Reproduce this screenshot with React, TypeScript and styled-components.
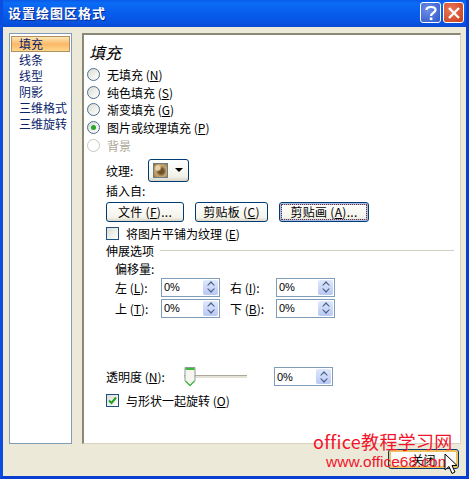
import React from "react";
import styled, { createGlobalStyle } from "styled-components";

const GlobalStyle = createGlobalStyle`
  html, body {
    margin: 0;
    padding: 0;
    background: #ffffff;
  }
  * {
    box-sizing: border-box;
  }
`;

const menuItems = ["填充", "线条", "线型", "阴影", "三维格式", "三维旋转"];

const fillOptions = [
  { label: "无填充", key: "N" },
  { label: "纯色填充", key: "S" },
  { label: "渐变填充", key: "G" },
  { label: "图片或纹理填充", key: "P", checked: true },
  { label: "背景", disabled: true },
];

function Spinner({ value }: { value: string }) {
  return (
    <SpinBox>
      <SpinValue>{value}</SpinValue>
      <SpinButtons>
        <svg width="14" height="16" viewBox="0 0 14 16">
          <path d="M7 2 L11 6.5 H9.6 L7 4 L4.4 6.5 H3 Z" fill="#4d6185" />
          <path d="M7 14 L11 9.5 H9.6 L7 12 L4.4 9.5 H3 Z" fill="#4d6185" />
        </svg>
      </SpinButtons>
    </SpinBox>
  );
}

function Radio({ checked, disabled }: { checked?: boolean; disabled?: boolean }) {
  return (
    <RadioCircle $disabled={disabled}>{checked && <RadioDot />}</RadioCircle>
  );
}

export default function App() {
  return (
    <>
      <GlobalStyle />
      <Window>
        <TitleBar>
          <TitleText>设置绘图区格式</TitleText>
          <TitleButtons>
            <HelpButton>
              <svg width="14" height="16" viewBox="0 0 14 16">
                <path
                  d="M2.5 5 C2.5 1 11.5 1 11.5 5 C11.5 8 7 7.5 7 11"
                  fill="none"
                  stroke="#fff"
                  strokeWidth="2.2"
                />
                <rect x="5.8" y="12.5" width="2.6" height="2.6" fill="#fff" />
              </svg>
            </HelpButton>
            <CloseButton>
              <svg width="14" height="14" viewBox="0 0 14 14">
                <path d="M2 2 L12 12 M12 2 L2 12" stroke="#fff" strokeWidth="2.4" />
              </svg>
            </CloseButton>
          </TitleButtons>
        </TitleBar>
        <Body>
          <Panels>
            <Sidebar>
              {menuItems.map((item, i) => (
                <MenuItem key={item} $active={i === 0}>
                  {item}
                </MenuItem>
              ))}
            </Sidebar>
            <Content>
              <Heading>填充</Heading>
              <RadioList>
                {fillOptions.map((opt) => (
                  <RadioRow key={opt.label} $disabled={opt.disabled}>
                    <Radio checked={opt.checked} disabled={opt.disabled} />
                    <span>
                      {opt.label}
                      {opt.key && (
                        <>
                          {" ("}
                          <Key>{opt.key}</Key>
                          {")"}
                        </>
                      )}
                    </span>
                  </RadioRow>
                ))}
              </RadioList>
              <Section>
                <TextureRow>
                  <span>纹理:</span>
                  <TextureButton>
                    <TextureSwatch />
                    <ArrowDown />
                  </TextureButton>
                </TextureRow>
                <Label>插入自:</Label>
                <ButtonRow>
                  <Button $w={78}>
                    文件 (<Key>F</Key>)...
                  </Button>
                  <Button $w={73}>
                    剪贴板 (<Key>C</Key>)
                  </Button>
                  <Button $w={90} $focused>
                    剪贴画 (<Key>A</Key>)...
                  </Button>
                </ButtonRow>
                <CheckRow $top={4}>
                  <CheckBox />
                  <span>
                    将图片平铺为纹理 (<Key>E</Key>)
                  </span>
                </CheckRow>
                <GroupHeading>
                  <span>伸展选项</span>
                  <GroupLine />
                </GroupHeading>
                <OffsetBlock>
                  <Label>偏移量:</Label>
                  <OffsetGrid>
                    <span>
                      左 (<Key>L</Key>):
                    </span>
                    <Spinner value="0%" />
                    <span>
                      右 (<Key>I</Key>):
                    </span>
                    <Spinner value="0%" />
                    <span>
                      上 (<Key>T</Key>):
                    </span>
                    <Spinner value="0%" />
                    <span>
                      下 (<Key>B</Key>):
                    </span>
                    <Spinner value="0%" />
                  </OffsetGrid>
                </OffsetBlock>
                <SliderRow>
                  <SliderLabel>
                    透明度 (<Key>N</Key>):
                  </SliderLabel>
                  <SliderTrack>
                    <SliderThumb viewBox="0 0 12 21" width="12" height="21">
                      <path d="M1 1.5 H11 V15 L6 20 L1 15 Z" fill="#f6f5ee" stroke="#8a9aa0" />
                      <path d="M1.5 2 H10.5 V4 H1.5 Z" fill="#3fb83f" />
                      <path d="M1.5 15 L6 19.5 L10.5 15" fill="none" stroke="#4cb84c" strokeWidth="1.4" />
                    </SliderThumb>
                  </SliderTrack>
                  <Spinner value="0%" />
                </SliderRow>
                <CheckRow $top={6}>
                  <CheckBox $checked>
                    <svg width="9" height="9" viewBox="0 0 9 9">
                      <path d="M1 4.5 L3.5 7 L8 1.5" fill="none" stroke="#21a121" strokeWidth="2" />
                    </svg>
                  </CheckBox>
                  <span>
                    与形状一起旋转 (<Key>O</Key>)
                  </span>
                </CheckRow>
              </Section>
            </Content>
          </Panels>
          <Footer>
            <FooterButton>关闭</FooterButton>
          </Footer>
        </Body>
        <WatermarkTitle>office教程学习网</WatermarkTitle>
        <WatermarkUrl>www.office68.com</WatermarkUrl>
        <Cursor viewBox="0 0 14 22" width="14" height="22">
          <path d="M1 1 V17 L5 13.5 L8 20.5 L11 19 L8 12.5 H13 Z" fill="#fff" stroke="#000" />
        </Cursor>
      </Window>
    </>
  );
}

const Window = styled.div`
  position: relative;
  width: 469px;
  height: 479px;
  overflow: hidden;
  background: #ece9d8;
  border-left: 3px solid #0a4de0;
  border-right: 3px solid #0a3ed0;
  border-bottom: 3px solid #0a3ed0;
  font-family: "Noto Sans CJK SC", "Liberation Sans", sans-serif;
  font-size: 12px;
  color: #000;
`;

const Key = styled.span`
  text-decoration: underline;
`;

const TitleBar = styled.div`
  display: flex;
  align-items: center;
  justify-content: space-between;
  height: 27px;
  margin: 0 -3px;
  padding: 0 5px 2px 8px;
  background: linear-gradient(
    180deg,
    #0a5ae8 0%,
    #0a6cf4 12%,
    #0860ee 40%,
    #0655e4 75%,
    #0a4ad8 100%
  );
`;

const TitleText = styled.div`
  color: #fff;
  font-size: 13px;
  font-weight: 700;
  letter-spacing: 1px;
  text-shadow: 1px 1px 0 #0a2a90;
`;

const TitleButtons = styled.div`
  display: flex;
  gap: 2px;
`;

const TitleButton = styled.div`
  display: flex;
  align-items: center;
  justify-content: center;
  width: 21px;
  height: 21px;
  border: 1px solid #fff;
  border-radius: 3px;
`;

const HelpButton = styled(TitleButton)`
  background: radial-gradient(circle at 35% 35%, #6d8fe8, #2f55c8);
`;

const CloseButton = styled(TitleButton)`
  background: radial-gradient(circle at 35% 35%, #e8795a, #c83a18);
`;

const Body = styled.div`
  display: flex;
  flex-direction: column;
  padding: 6px 5px 0 6px;
`;

const Panels = styled.div`
  display: flex;
  gap: 10px;
  height: 411px;
`;

const Sidebar = styled.div`
  width: 63px;
  padding: 2px 1px;
  background: #fff;
  border: 1px solid #7f9db9;
  color: #0a246a;
`;

const MenuItem = styled.div<{ $active?: boolean }>`
  height: 16px;
  white-space: nowrap;
  font-size: 12px;
  border: ${(p) => (p.$active ? "1px solid #b09060" : "none")};
  line-height: ${(p) => (p.$active ? "14px" : "16px")};
  padding-left: ${(p) => (p.$active ? "7px" : "8px")};
  background: ${(p) =>
    p.$active
      ? "linear-gradient(180deg, #fde8b8 0%, #fbb868 50%, #fdd888 100%)"
      : "transparent"};
`;

const Content = styled.div`
  flex: 1;
  padding: 6px 0 0 3px;
  background: #fff;
  border-top: 2px solid #8a8878;
  border-left: 2px solid #8a8878;
  border-right: 1px solid #d8d4c0;
  border-bottom: 1px solid #d8d4c0;
`;

const Heading = styled.div`
  height: 22px;
  padding-left: 2px;
  font-size: 16px;
  line-height: 22px;
  font-style: italic;
`;

const RadioList = styled.div`
  display: flex;
  flex-direction: column;
  margin-top: 3px;
`;

const RadioRow = styled.div<{ $disabled?: boolean }>`
  display: flex;
  align-items: center;
  gap: 7px;
  height: 17.6px;
  color: ${(p) => (p.$disabled ? "#aca899" : "#000")};
`;

const RadioCircle = styled.div<{ $disabled?: boolean }>`
  display: flex;
  align-items: center;
  justify-content: center;
  width: 13px;
  height: 13px;
  border-radius: 50%;
  border: 1px solid ${(p) => (p.$disabled ? "#c8c8c0" : "#4d6f8f")};
  background: ${(p) =>
    p.$disabled ? "#fff" : "linear-gradient(135deg, #dcdcd4, #ffffff)"};
`;

const RadioDot = styled.div`
  width: 5px;
  height: 5px;
  border-radius: 50%;
  background: #2aa52a;
`;

const Section = styled.div`
  display: flex;
  flex-direction: column;
  padding-left: 19px;
`;

const TextureRow = styled.div`
  display: flex;
  align-items: center;
  gap: 15px;
  margin-top: 5px;
`;

const TextureButton = styled.div`
  display: flex;
  align-items: center;
  justify-content: space-between;
  width: 41px;
  height: 23px;
  padding: 0 5px 0 4px;
  border: 1px solid #003c74;
  border-radius: 3px;
  background: linear-gradient(180deg, #ffffff, #f2f1e8 80%, #d8d4c4);
`;

const TextureSwatch = styled.div`
  width: 15px;
  height: 15px;
  border: 1px solid #6a7a8a;
  background:
    radial-gradient(circle at 30% 30%, #e8d4a8 0 15%, transparent 30%),
    radial-gradient(circle at 55% 55%, #6e4f28 0 25%, #c8a870 55%, #8a6a3a 100%);
`;

const ArrowDown = styled.div`
  width: 0;
  height: 0;
  border-left: 4px solid transparent;
  border-right: 4px solid transparent;
  border-top: 4px solid #000;
`;

const Label = styled.div`
  height: 18px;
  line-height: 18px;
  white-space: nowrap;
`;

const ButtonRow = styled.div`
  display: flex;
  gap: 11px;
  margin-top: 2px;
`;

const Button = styled.div<{ $w: number; $focused?: boolean }>`
  display: flex;
  align-items: center;
  justify-content: center;
  width: ${(p) => p.$w}px;
  height: 20px;
  border: 1px solid #003c74;
  border-radius: 3px;
  letter-spacing: 0.3px;
  white-space: pre;
  background: linear-gradient(180deg, #ffffff, #f4f3ea 80%, #dcd8c8);
  box-shadow: ${(p) => (p.$focused ? "inset 0 0 0 2px #a8c0e8" : "none")};
  outline: ${(p) => (p.$focused ? "1px dotted #7a3030" : "none")};
  outline-offset: ${(p) => (p.$focused ? "-3px" : "0")};
`;

const CheckRow = styled.div<{ $top: number }>`
  display: flex;
  align-items: center;
  gap: 7px;
  height: 16px;
  margin-top: ${(p) => p.$top}px;
`;

const CheckBox = styled.div<{ $checked?: boolean }>`
  display: flex;
  align-items: center;
  justify-content: center;
  width: 13px;
  height: 13px;
  border: 1px solid #1c5180;
  background: linear-gradient(135deg, #dcdcd4, #ffffff);
`;

const GroupHeading = styled.div`
  display: flex;
  align-items: center;
  gap: 6px;
  height: 18px;
`;

const GroupLine = styled.div`
  flex: 1;
  height: 1px;
  margin-right: 6px;
  background: #d0d0bf;
`;

const OffsetBlock = styled.div`
  padding-left: 9px;
`;

const OffsetGrid = styled.div`
  display: grid;
  grid-template-columns: 46px 58px 57px 58px;
  grid-auto-rows: 19px;
  row-gap: 2px;
  align-items: center;
  & > span:nth-child(3),
  & > span:nth-child(7) {
    padding-left: 11px;
  }
`;

const SpinBox = styled.div`
  display: flex;
  align-items: center;
  justify-content: space-between;
  width: 59px;
  height: 19px;
  padding: 1px 1px 1px 2px;
  background: #fff;
  border: 1px solid #7f9db9;
`;

const SpinValue = styled.span`
  font-family: "Liberation Sans", sans-serif;
  font-size: 11px;
`;

const SpinButtons = styled.div`
  display: flex;
  align-items: center;
  justify-content: center;
  width: 15px;
  height: 15px;
  background: linear-gradient(180deg, #dfe8fc, #b8c8f4);
  border-radius: 2px;
`;

const SliderRow = styled.div`
  display: flex;
  align-items: center;
  margin-top: 49px;
  height: 20px;
`;

const SliderLabel = styled.div`
  width: 78px;
  white-space: nowrap;
`;

const SliderTrack = styled.div`
  position: relative;
  width: 63px;
  height: 3px;
  margin-right: 27px;
  background: #e4e2d4;
  border-top: 1px solid #aca899;
`;

const SliderThumb = styled.svg`
  position: absolute;
  top: -10px;
  left: 0;
`;

const Footer = styled.div`
  display: flex;
  justify-content: flex-end;
  padding: 5px 2px 0 0;
`;

const FooterButton = styled.div`
  display: flex;
  align-items: center;
  justify-content: center;
  width: 71px;
  height: 20px;
  border: 1px solid #003c74;
  border-radius: 3px;
  background: linear-gradient(180deg, #ffffff, #f4f3ea 80%, #dcd8c8);
  box-shadow: inset 0 0 0 2px #f0c060;
`;

const WatermarkTitle = styled.div`
  position: absolute;
  left: 310px;
  top: 430px;
  color: #f2142c;
  font-size: 18px;
  line-height: 22px;
  letter-spacing: 0.3px;
  white-space: nowrap;
`;

const WatermarkUrl = styled.div`
  position: absolute;
  left: 323px;
  top: 453px;
  color: #f2142c;
  font-family: "Liberation Sans", sans-serif;
  font-size: 15.5px;
  line-height: 17px;
  white-space: nowrap;
`;

const Cursor = styled.svg`
  position: absolute;
  left: 441px;
  top: 453px;
`;
